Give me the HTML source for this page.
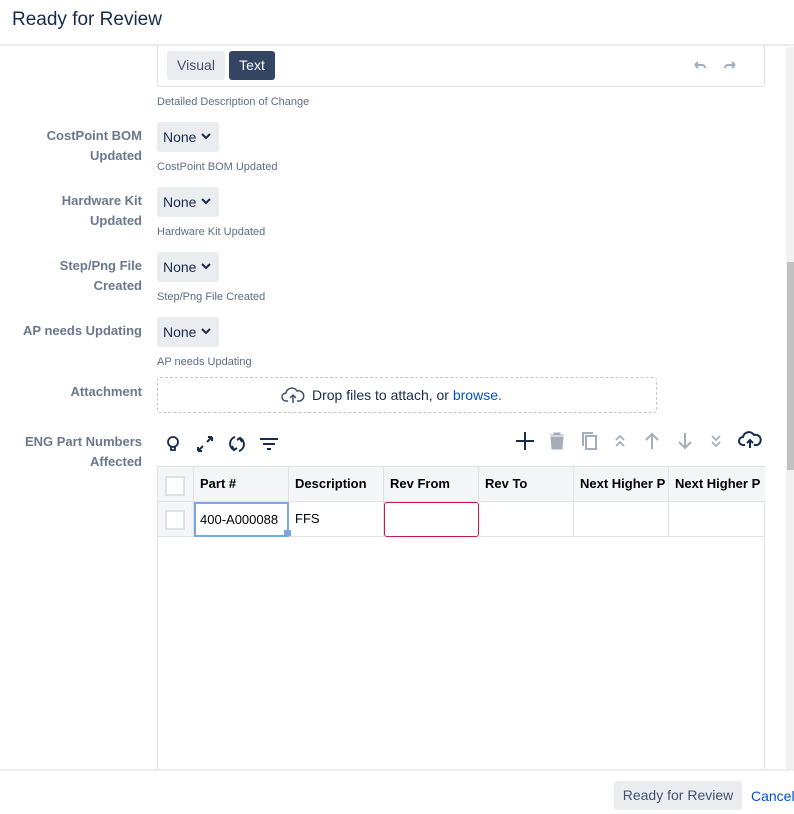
<!DOCTYPE html>
<html><head><meta charset="utf-8"><style>
*{box-sizing:border-box;margin:0;padding:0}
body{width:794px;height:814px;overflow:hidden;background:#fff;font-family:"Liberation Sans",sans-serif;position:relative;color:#172b4d}
.hdr{position:absolute;left:0;top:0;width:794px;height:46px;border-bottom:2px solid #ebecf0}
.hdr h1{position:absolute;left:12px;top:9px;font-size:19px;font-weight:normal;color:#172b4d}
.lbl{position:absolute;right:652px;text-align:right;font-size:13px;font-weight:bold;color:#6b778c;line-height:20px}
.sel{position:absolute;left:157px;width:62px;height:30px;background:#ebecf0;border-radius:3px;font-size:14px;line-height:30px;padding-left:6px;color:#172b4d}
.sel svg{position:absolute;left:44px;top:11px}
.help{position:absolute;left:157px;font-size:11px;color:#5e6c84}
.btn{position:absolute;font-size:14px;border-radius:3px;height:29px;line-height:29px;text-align:center}
.tbl{position:absolute;left:157px;top:466px;width:608px;height:304px;border:1px solid #dfe1e6;border-bottom:none}
.c{position:absolute;height:35px;border-right:1px solid #dfe1e6;border-bottom:1px solid #dfe1e6;font-size:13px;line-height:34px;padding-left:6px;white-space:nowrap;overflow:hidden;color:#000}
.h{background:#f4f5f7;font-weight:bold}
.cb{position:absolute;width:20px;height:20px;border:2px solid #dfe1e6;background:#fff}
.ic{position:absolute}
</style></head><body>
<div class="hdr"><h1>Ready for Review</h1></div>

<div style="position:absolute;left:157px;top:44px;width:608px;height:43px;border:1px solid #dfe1e6;border-top:none;border-radius:0 0 3px 3px"></div>
<div class="btn" style="left:167px;top:51px;width:58px;background:#ebecf0;color:#42526e">Visual</div>
<div class="btn" style="left:229px;top:51px;width:46px;background:#344563;color:#fff">Text</div>
<svg class="ic" style="left:692px;top:60px" width="16" height="12"><path d="M3 5 h7 a3 3 0 0 1 3 3 M3 5 l3-3 M3 5 l3 3" stroke="#a5adba" stroke-width="2" fill="none"/></svg>
<svg class="ic" style="left:722px;top:60px" width="16" height="12"><path d="M13 5 h-7 a3 3 0 0 0 -3 3 M13 5 l-3-3 M13 5 l-3 3" stroke="#a5adba" stroke-width="2" fill="none"/></svg>
<div class="help" style="top:96px">Detailed Description of Change</div>

<div class="lbl" style="top:126px">CostPoint BOM<br>Updated</div>
<div class="sel" style="top:122px">None<svg width="10" height="8"><path d="M1 1l4 4 4-4" stroke="#172b4d" stroke-width="2" fill="none"/></svg></div>
<div class="help" style="top:161px">CostPoint BOM Updated</div>

<div class="lbl" style="top:191px">Hardware Kit<br>Updated</div>
<div class="sel" style="top:187px">None<svg width="10" height="8"><path d="M1 1l4 4 4-4" stroke="#172b4d" stroke-width="2" fill="none"/></svg></div>
<div class="help" style="top:226px">Hardware Kit Updated</div>

<div class="lbl" style="top:256px">Step/Png File<br>Created</div>
<div class="sel" style="top:252px">None<svg width="10" height="8"><path d="M1 1l4 4 4-4" stroke="#172b4d" stroke-width="2" fill="none"/></svg></div>
<div class="help" style="top:291px">Step/Png File Created</div>

<div class="lbl" style="top:321px">AP needs Updating</div>
<div class="sel" style="top:317px">None<svg width="10" height="8"><path d="M1 1l4 4 4-4" stroke="#172b4d" stroke-width="2" fill="none"/></svg></div>
<div class="help" style="top:356px">AP needs Updating</div>

<div class="lbl" style="top:382px">Attachment</div>
<div style="position:absolute;left:157px;top:377px;width:500px;height:36px;border:1px dashed #c1c7d0;border-radius:3px"></div>
<svg class="ic" style="left:281px;top:385px" width="24" height="20"><path d="M7 16 H5 a4 4 0 0 1 0-8 a6 6 0 0 1 11-2 a5 5 0 0 1 3 10 h-3 M12 18 v-8 M9 13 l3-3 3 3" stroke="#42526e" stroke-width="1.5" fill="none"/></svg>
<div style="position:absolute;left:312px;top:387px;font-size:14px;color:#172b4d">Drop files to attach, or <span style="color:#0052cc">browse.</span></div>

<div class="lbl" style="top:432px">ENG Part Numbers<br>Affected</div>
<svg class="ic" style="left:164px;top:435px;" width="18" height="18"><circle cx="9" cy="7" r="5" stroke="#172b4d" stroke-width="1.8" fill="none"/><path d="M7 12v3h4v-3" stroke="#172b4d" stroke-width="1.8" fill="none"/></svg>
<svg class="ic" style="left:195px;top:435px" width="20" height="18"><path d="M3 16 l5-5 M3 16 v-4 M3 16 h4 M17 2 l-5 5 M17 2 v4 M17 2 h-4" stroke="#172b4d" stroke-width="2" fill="none"/></svg>
<svg class="ic" style="left:227px;top:434px" width="20" height="20"><path d="M8 3 a7 7 0 0 0 -1 13 M5 12 l2 4 3-2 M12 17 a7 7 0 0 0 1-13 M15 8 l-2-4 -3 2" stroke="#172b4d" stroke-width="2" fill="none"/></svg>
<svg class="ic" style="left:259px;top:436px" width="20" height="16"><path d="M1 3h18 M4 8h12 M8 13h4" stroke="#172b4d" stroke-width="2"/></svg>
<svg class="ic" style="left:515px;top:431px" width="20" height="20"><path d="M10 1v18 M1 10h18" stroke="#172b4d" stroke-width="2"/></svg>
<svg class="ic" style="left:548px;top:432px" width="18" height="18"><path d="M2 3h14 M6 3v-2h6v2 M3 5h12l-1 12h-10z" fill="#a5adba" stroke="#a5adba"/></svg>
<svg class="ic" style="left:581px;top:431px" width="18" height="20"><rect x="5" y="5" width="10" height="13" stroke="#a5adba" stroke-width="2" fill="none"/><path d="M2 15V2h10" stroke="#a5adba" stroke-width="2" fill="none"/></svg>
<svg class="ic" style="left:614px;top:434px" width="12" height="14"><path d="M2 6l4-4 4 4 M2 12l4-4 4 4" stroke="#a5adba" stroke-width="1.8" fill="none"/></svg>
<svg class="ic" style="left:644px;top:432px" width="16" height="18"><path d="M8 17V2 M2 8l6-6 6 6" stroke="#a5adba" stroke-width="2" fill="none"/></svg>
<svg class="ic" style="left:677px;top:432px" width="16" height="18"><path d="M8 1v15 M2 10l6 6 6-6" stroke="#a5adba" stroke-width="2" fill="none"/></svg>
<svg class="ic" style="left:710px;top:434px" width="12" height="14"><path d="M2 2l4 4 4-4 M2 8l4 4 4-4" stroke="#a5adba" stroke-width="1.8" fill="none"/></svg>
<svg class="ic" style="left:738px;top:430px" width="24" height="20"><path d="M7 15 H5 a4 4 0 0 1 0-8 a6 6 0 0 1 11-2 a5 5 0 0 1 3 10 h-3 M12 18 v-8 M9 13 l3-3 3 3" stroke="#172b4d" stroke-width="2" fill="none"/></svg>

<div class="tbl">
 <div class="c h" style="left:0;top:0;width:36px"></div>
 <div class="cb" style="left:7px;top:9px"></div>
 <div class="c h" style="left:36px;top:0;width:95px">Part #</div>
 <div class="c h" style="left:131px;top:0;width:95px">Description</div>
 <div class="c h" style="left:226px;top:0;width:95px">Rev From</div>
 <div class="c h" style="left:321px;top:0;width:95px">Rev To</div>
 <div class="c h" style="left:416px;top:0;width:95px">Next Higher P</div>
 <div class="c h" style="left:511px;top:0;width:96px;border-right:none">Next Higher P</div>
 <div class="c" style="left:0;top:35px;width:36px;background:#f4f5f7"></div>
 <div class="cb" style="left:7px;top:43px"></div>
 <div class="c" style="left:36px;top:35px;width:95px;border:2px solid #7aa7e0;padding-left:4px;line-height:31px">400-A000088</div>
 <div style="position:absolute;left:126px;top:63px;width:7px;height:7px;background:#7aa7e0"></div>
 <div class="c" style="left:131px;top:35px;width:95px">FFS</div>
 <div class="c" style="left:226px;top:35px;width:95px;border:1px solid #c9174a;border-radius:3px"></div>
 <div class="c" style="left:321px;top:35px;width:95px"></div>
 <div class="c" style="left:416px;top:35px;width:95px"></div>
 <div class="c" style="left:511px;top:35px;width:96px;border-right:none"></div>
</div>

<div style="position:absolute;left:786px;top:47px;width:8px;height:723px;background:#f1f1f1"></div>
<div style="position:absolute;left:787px;top:262px;width:7px;height:208px;background:#c1c1c1"></div>

<div style="position:absolute;left:0;top:769px;width:794px;height:2px;background:#ebecf0"></div>
<div class="btn" style="left:614px;top:781px;width:128px;background:#ebecf0;color:#42526e">Ready for Review</div>
<div style="position:absolute;left:751px;top:788px;font-size:14px;color:#0052cc">Cancel</div>
</body></html>
